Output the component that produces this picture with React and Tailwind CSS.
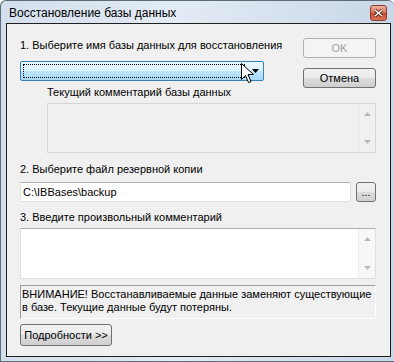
import React from 'react';

const btn = 'h-[20px] rounded-[3px] border border-[#707070] bg-[linear-gradient(#f2f2f2,#ebebeb_50%,#dddddd_50%,#cfcfcf)] text-[11px] leading-none text-black flex items-center justify-center whitespace-nowrap';

const ScrollArrows = ({ track }) => (
  <div className={`w-[17px] self-stretch flex flex-col justify-between items-center py-[8px] ${track}`}>
    <svg width="7" height="4" viewBox="0 0 7 4"><path d="M0 4 L3.5 0 L7 4 Z" fill="#b8b8b8" /></svg>
    <svg width="7" height="4" viewBox="0 0 7 4"><path d="M0 0 L3.5 4 L7 0 Z" fill="#b8b8b8" /></svg>
  </div>
);

const Cursor = () => (
  <svg className="absolute left-[220px] top-[1px]" width="14" height="22" viewBox="0 0 14 22">
    <path d="M0.5 0.5 L0.5 16.5 L4.5 12.5 L7.5 19.5 L10 18.5 L7 11.5 L12.5 11.5 Z" fill="#fff" stroke="#000" strokeWidth="1" strokeLinejoin="miter" />
  </svg>
);

export default function App() {
  return (
    <div className="w-[394px] h-[362px] overflow-hidden bg-white" style={{ fontFamily: '"Liberation Sans", Arial, sans-serif' }}>
      <div className="w-[394px] h-[362px] rounded-t-[6px] border border-r-0 border-[#5d6b7a] bg-[linear-gradient(90deg,#d3dfec,#e3ebf4_45%,#c8d7e7)] flex flex-col pl-[5px] pr-[3px] pb-[4px]">
        <div className="h-[22px] flex items-center justify-between shrink-0">
          <span className="text-[12px] text-black pl-[3px] pt-[1px] whitespace-nowrap">Восстановление базы данных</span>
          <div className="w-[17px] h-[16px] mr-[4px] mt-[2px] rounded-[3px] border border-[#8d3a2b] bg-[linear-gradient(#eeb3a2,#d96f55_50%,#c8472c_50%,#d8765a)] flex items-center justify-center">
            <svg width="9" height="8" viewBox="0 0 9 8">
              <path d="M1 1 L8 7 M8 1 L1 7" stroke="#4a1b12" strokeWidth="3" />
              <path d="M1 1 L8 7 M8 1 L1 7" stroke="#fff" strokeWidth="1.6" />
            </svg>
          </div>
        </div>
        <div className="flex-1 border border-[#1f1f1f] bg-[#f0f0f0] pl-[13px] pr-[14px] pt-[14px] text-[11px] leading-[14px] text-black whitespace-nowrap">
          <div className="flex">
            <div className="flex-1 flex flex-col">
              <div>1. Выберите имя базы данных для восстановления</div>
              <div className="relative mt-[9px] w-[244px] h-[20px] rounded-[2px] border border-[#3c7fb1] bg-[linear-gradient(#eaf6fd,#d9f0fc_50%,#bee6fd_50%,#a7d9f5)] flex items-center">
                <div className="ml-[2px] w-[222px] h-[14px] border border-dotted border-black" />
                <svg className="ml-[7px]" width="7" height="4" viewBox="0 0 7 4"><path d="M0 0 L7 0 L3.5 4 Z" fill="#000" /></svg>
                <Cursor />
              </div>
            </div>
            <div className="w-[73px] flex flex-col gap-[10px]">
              <div className="h-[20px] rounded-[3px] border border-[#adb2b5] bg-[#f4f4f4] text-[11px] text-[#a0a0a0] flex items-center justify-center">OK</div>
              <div className={btn}>Отмена</div>
            </div>
          </div>
          <div className="ml-[27px] -mt-[3px]">Текущий комментарий базы данных</div>
          <div className="ml-[27px] mt-[4px] h-[50px] border border-[#d6d6d6] bg-[#f0f0f0] flex justify-end">
            <ScrollArrows track="border-l border-[#e6e6e6]" />
          </div>
          <div className="mt-[9px]">2. Выберите файл резервной копии</div>
          <div className="mt-[6px] flex gap-[5px]">
            <div className="flex-1 h-[20px] rounded-[2px] border border-[#dbdfe6] border-t-[#abadb3] bg-white pl-[2px] flex items-center">C:\IBBases\backup</div>
            <div className={`${btn} w-[20px] text-[10px] items-end pb-[3px]`}>...</div>
          </div>
          <div className="mt-[8px]">3. Введите произвольный комментарий</div>
          <div className="mt-[4px] h-[51px] border border-[#dbdfe6] border-t-[#abadb3] bg-white flex justify-end">
            <ScrollArrows track="bg-[#f7f7f7] border-l border-[#ececec]" />
          </div>
          <div className="mt-[6px] h-[34px] border border-t-[#a0a0a0] border-l-[#a0a0a0] border-r-white border-b-white pl-[1px] pt-[2px] leading-[13px]">
            ВНИМАНИЕ! Восстанавливаемые данные заменяют существующие<br />в базе. Текущие данные будут потеряны.
          </div>
          <div className={`${btn} mt-[5px] w-[92px] h-[22px]`}>Подробности &gt;&gt;</div>
        </div>
      </div>
    </div>
  );
}
